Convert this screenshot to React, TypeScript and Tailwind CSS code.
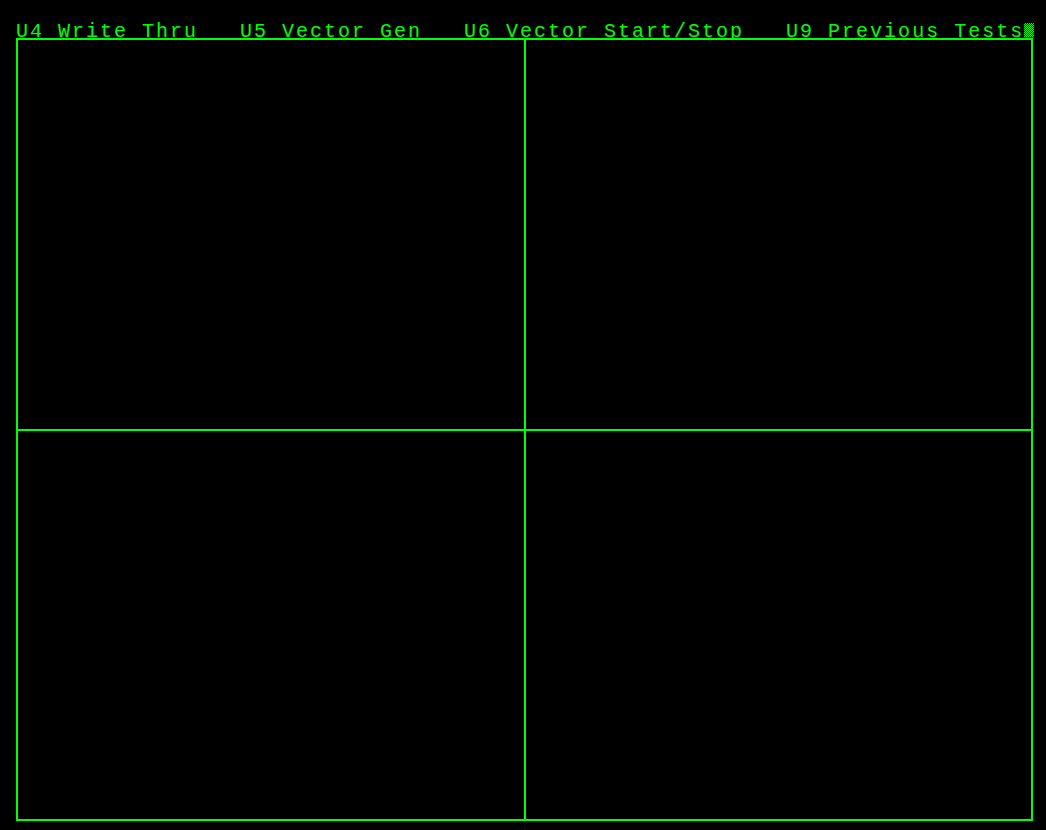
import React from "react";

export default function App() {
  return (
    <div className="w-[1046px] h-[830px] bg-black overflow-hidden">
      <div className="h-[38px] pl-[16px] pt-[22px] flex items-start">
        <span
          className="text-[20px] leading-[20px] tracking-[2px] text-[#00ff00] whitespace-pre"
          style={{ fontFamily: '"Liberation Mono", "DejaVu Sans Mono", monospace' }}
        >
          {"U4 Write Thru   U5 Vector Gen   U6 Vector Start/Stop   U9 Previous Tests"}
        </span>
        <span className="inline-block w-[10px] h-[14px] mt-[1px] bg-[conic-gradient(#00ff00_25%,#000_0_50%,#00ff00_0_75%,#000_0)] bg-[length:2px_2px]" />
      </div>
      <div className="ml-[16px] w-[1017px] h-[783px] bg-[#00ff00] p-[2px] grid grid-cols-[506px_505px] grid-rows-[389px_388px] gap-[2px]">
        <div className="bg-black" />
        <div className="bg-black" />
        <div className="bg-black" />
        <div className="bg-black" />
      </div>
    </div>
  );
}
